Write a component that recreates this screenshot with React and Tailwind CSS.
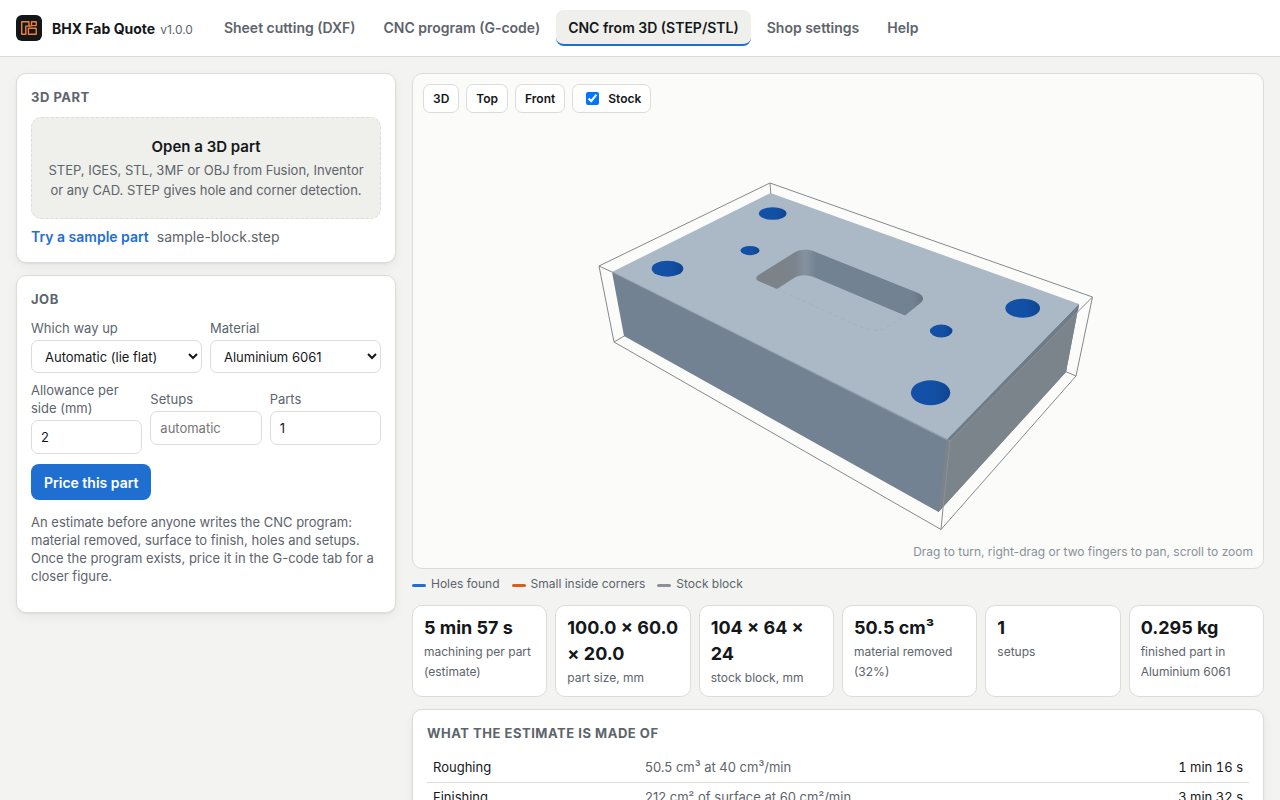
import { useState } from 'react'

const tabs = [
  'Sheet cutting (DXF)',
  'CNC program (G-code)',
  'CNC from 3D (STEP/STL)',
  'Shop settings',
  'Help',
]

const stats = [
  { value: '5 min 57 s', label: 'machining per part (estimate)' },
  { value: '100.0 × 60.0 × 20.0', label: 'part size, mm' },
  { value: '104 × 64 × 24', label: 'stock block, mm' },
  { value: '50.5 cm³', label: 'material removed (32%)' },
  { value: '1', label: 'setups' },
  { value: '0.295 kg', label: 'finished part in Aluminium 6061' },
]

const rows = [
  { name: 'Roughing', detail: '50.5 cm³ at 40 cm³/min', time: '1 min 16 s' },
  { name: 'Finishing', detail: '212 cm² of surface at 60 cm²/min', time: '3 min 32 s' },
]

const legend = [
  { name: 'Holes found', color: 'bg-[#1f6fd1]' },
  { name: 'Small inside corners', color: 'bg-[#e0591a]' },
  { name: 'Stock block', color: 'bg-[#8a9099]' },
]

const holes = [
  { cx: 772.7, cy: 213.5, rx: 13.8, ry: 6.3 },
  { cx: 750, cy: 250.6, rx: 9.5, ry: 4.6 },
  { cx: 667.5, cy: 268.7, rx: 15.8, ry: 8 },
  { cx: 1022.7, cy: 308.2, rx: 17.3, ry: 9.5 },
  { cx: 941.2, cy: 331, rx: 11.3, ry: 6.4 },
  { cx: 930.6, cy: 392.7, rx: 19.7, ry: 12.5 },
]

function classNames(...classes) {
  return classes.filter(Boolean).join(' ')
}

function Logo() {
  return (
    <svg viewBox="0 0 26 26" className="size-[26px] shrink-0" fill="none" aria-hidden="true">
      <rect width="26" height="26" rx="6" fill="#14171a" />
      <g stroke="#ee7f3c" strokeWidth="1.4" strokeLinejoin="round">
        <path d="M5.7 6.7h7.2v4.4H9.8v8.2H5.7z" />
        <path d="M15.5 6.7h4.7v3.9h-4.7z" />
        <path d="M12.4 13.3h7.8v6h-7.8z" />
        <path d="M12.9 11.1h2.6" />
      </g>
    </svg>
  )
}

function Card({ title, children }) {
  return (
    <section className="rounded-[10px] border border-[#dcdcd8] bg-white p-3.5 shadow-[0_1px_2px_rgba(0,0,0,0.06),0_4px_12px_rgba(0,0,0,0.05)]">
      <h2 className="mb-2.5 text-[13px] leading-[19px] font-bold tracking-[0.04em] text-[#5c646c] uppercase">{title}</h2>
      {children}
    </section>
  )
}

function Field({ id, label, children }) {
  return (
    <div className="flex min-w-0 flex-1 flex-col gap-[3px]">
      <label htmlFor={id} className="text-[13px] leading-[18px] text-[#5c646c]">{label}</label>
      {children}
    </div>
  )
}

const fieldClass = 'w-full rounded-[7px] border border-[#dcdcd8] bg-white text-[13px] text-[#14171a] placeholder:text-[#757575]'

// Part inside its stock block
function PartView() {
  return (
    <svg viewBox="413 74 850 494" className="block h-[494px] w-full" role="img" aria-label="3D part">
      <defs>
        <linearGradient id="hole">
          <stop offset="0" stopColor="#1351a8" />
          <stop offset="0.6" stopColor="#1250a5" />
          <stop offset="1" stopColor="#0f448f" />
        </linearGradient>
        <linearGradient id="wall" gradientUnits="userSpaceOnUse" x1="756" y1="0" x2="924" y2="0">
          <stop offset="0" stopColor="#7c8289" />
          <stop offset="0.23" stopColor="#7b838b" />
          <stop offset="0.29" stopColor="#8492a0" />
          <stop offset="0.36" stopColor="#738292" />
          <stop offset="0.93" stopColor="#738292" />
          <stop offset="1" stopColor="#66727f" />
        </linearGradient>
      </defs>

      {/* hidden stock edges */}
      <path d="M770 183L771 196M614 342L626 335M1076 376L1062 370" stroke="#84888f" />

      {/* part faces */}
      <path d="M612 272L946.5 438L1079 304L1066 372L938.5 512L624 336Z" fill="#738292" />
      <path d="M946.5 440L1079 304L1066 372L938.5 512Z" fill="#7b838b" />
      <path d="M946.5 440L1079 304L1078 311L950 441Z" fill="#6f7c89" />
      <path d="M770.5 193L1079 304L946.5 440L612 272Z" fill="#abb8c5" />

      {/* pocket */}
      <path
        d="M758.5 281C755.5 279.5 755.5 277 758.5 275L794 252.8C799 249.3 808 248.8 815 251.8L917 292.4C923.5 295.2 925 299 920.5 303L905 315.5L816 278C808 274 799 274.5 794 278L777 289Z"
        fill="url(#wall)"
      />
      <path d="M777 289L862 327.5Q880 334 889 326L905 315.5" fill="none" stroke="#a1aebb" strokeWidth="0.8" strokeDasharray="4 3" />

      {holes.map((hole) => (
        <ellipse key={hole.cx} {...hole} fill="url(#hole)" />
      ))}

      {/* stock block */}
      <g fill="none" stroke="#84888f" strokeLinejoin="round">
        <path d="M612 272L599 266L770 183L1092.500 297L1079 310.500" />
        <path d="M599 266L614 342L941 529.500L1076 376L1092.500 297" />
        <path d="M943 508L941 529.500" />
        <path d="M612 272L950 441" stroke="#8794a1" />
        <path d="M1079 310.500L950 441L943 508" stroke="#8f9295" />
      </g>
    </svg>
  )
}

export default function App() {
  const [tab, setTab] = useState('CNC from 3D (STEP/STL)')
  const [stock, setStock] = useState(true)

  return (
    <div className="min-h-screen bg-[#f3f3f1] font-['Inter',sans-serif] text-[14px] leading-[21px] text-[#14171a]">
      <header className="flex items-center gap-[19px] border-b border-[#dcdcd8] bg-white px-4 py-2.5">
        <div className="flex items-center gap-2.5">
          <Logo />
          <div className="flex items-baseline gap-[5px]">
            <span className="font-bold">BHX Fab Quote</span>
            <span className="text-xs text-[#5c646c]">v1.0.0</span>
          </div>
        </div>
        <nav className="flex gap-1">
          {tabs.map((name) => (
            <button
              key={name}
              type="button"
              onClick={() => setTab(name)}
              className={classNames(
                'h-9 rounded-lg border-b-2 px-3 font-semibold',
                name === tab ? 'border-[#1f6fd1] bg-[#efefeb] text-[#14171a]' : 'border-transparent text-[#5c646c]'
              )}
            >
              {name}
            </button>
          ))}
        </nav>
      </header>

      <main className="grid grid-cols-[380px_minmax(0,1fr)] items-start gap-4 p-4">
        {/* Left column */}
        <div className="grid gap-3">
          <Card title="3D part">
            <button
              type="button"
              className="block w-full rounded-[10px] border border-dashed border-[#dcdcd8] bg-[#efefeb] px-4 py-[18px] text-center"
            >
              <span className="block text-[15px] leading-[22px] font-semibold">Open a 3D part</span>
              <span className="mt-0.5 block text-[13px] leading-5 text-[#5c646c]">
                STEP, IGES, STL, 3MF or OBJ from Fusion, Inventor or any CAD. STEP gives hole and corner detection.
              </span>
            </button>
            <div className="mt-[7px] mb-px flex gap-2">
              <a href="#sample" className="font-semibold text-[#1f6fd1]">Try a sample part</a>
              <span className="text-[#5c646c]">sample-block.step</span>
            </div>
          </Card>

          <Card title="Job">
            <div className="flex gap-2">
              <Field id="way-up" label="Which way up">
                <select id="way-up" className={classNames(fieldClass, 'h-[33px] pl-[9px]')}>
                  <option>Automatic (lie flat)</option>
                </select>
              </Field>
              <Field id="material" label="Material">
                <select id="material" className={classNames(fieldClass, 'h-[33px] pl-[9px]')}>
                  <option>Aluminium 6061</option>
                </select>
              </Field>
            </div>
            <div className="mt-2 flex items-center gap-2">
              <Field id="allowance" label="Allowance per side (mm)">
                <input id="allowance" defaultValue="2" className={classNames(fieldClass, 'h-[34px] px-[9px]')} />
              </Field>
              <Field id="setups" label="Setups">
                <input id="setups" placeholder="automatic" className={classNames(fieldClass, 'h-[34px] px-[9px]')} />
              </Field>
              <Field id="parts" label="Parts">
                <input id="parts" defaultValue="1" className={classNames(fieldClass, 'h-[34px] px-[9px]')} />
              </Field>
            </div>
            <button type="button" className="mt-2.5 block h-9 rounded-lg bg-[#1f6fd1] px-[13px] font-semibold text-white">
              Price this part
            </button>
            <p className="my-[13px] text-[13px] leading-[18px] text-[#5c646c]">
              An estimate before anyone writes the CNC program: material removed, surface to finish, holes and setups.
              Once the program exists, price it in the G-code tab for a closer figure.
            </p>
          </Card>
        </div>

        {/* Right column */}
        <div className="min-w-0">
          <div className="relative overflow-hidden rounded-[10px] border border-[#dcdcd8] bg-[#fbfbf9]">
            <PartView />
            <div className="absolute top-2.5 left-2.5 flex gap-[7px] text-xs font-semibold">
              {['3D', 'Top', 'Front'].map((view) => (
                <button key={view} type="button" className="h-[29px] rounded-[7px] border border-[#dcdcd8] bg-white px-[9px]">
                  {view}
                </button>
              ))}
              <label className="flex h-[29px] items-center gap-[9px] rounded-[7px] border border-[#dcdcd8] bg-white pr-[9px] pl-[13px]">
                <input
                  type="checkbox"
                  checked={stock}
                  onChange={(event) => setStock(event.target.checked)}
                  className="size-[13px]"
                />
                Stock
              </label>
            </div>
            <p className="absolute right-2.5 bottom-1.5 text-xs leading-5 text-[#8a9099]">
              Drag to turn, right-drag or two fingers to pan, scroll to zoom
            </p>
          </div>

          <ul className="mt-1.5 flex gap-3 text-xs leading-[18px] text-[#5c646c]">
            {legend.map((item) => (
              <li key={item.name} className="flex items-center gap-[5px]">
                <span className={classNames('mt-0.5 h-[3px] w-3.5 rounded-sm', item.color)} />
                {item.name}
              </li>
            ))}
          </ul>

          <div className="mt-3 grid grid-cols-6 gap-2">
            {stats.map((stat) => (
              <div key={stat.label} className="rounded-[10px] border border-[#dcdcd8] bg-white px-[11px] pt-[9px] pb-2">
                <div className="text-lg leading-[26px] font-bold">{stat.value}</div>
                <div className="mt-px text-xs leading-5 text-[#5c646c]">{stat.label}</div>
              </div>
            ))}
          </div>

          <div className="mt-3">
            <Card title="What the estimate is made of">
              <table className="w-full text-[13px] leading-[19px]">
                <tbody>
                  {rows.map((row) => (
                    <tr key={row.name} className="border-b border-[#dcdcd8]">
                      <th scope="row" className="w-[212px] px-1.5 py-[5px] text-left font-normal">{row.name}</th>
                      <td className="px-1.5 py-[5px] text-[#5c646c]">{row.detail}</td>
                      <td className="px-1.5 py-[5px] text-right tabular-nums">{row.time}</td>
                    </tr>
                  ))}
                </tbody>
              </table>
            </Card>
          </div>
        </div>
      </main>
    </div>
  )
}
